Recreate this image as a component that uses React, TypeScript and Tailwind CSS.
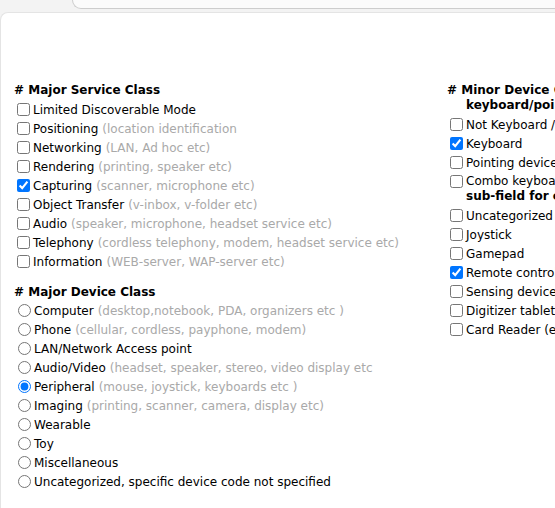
import React from "react"

type Item = { label: string; hint?: string; checked?: boolean }

const serviceClasses: Item[] = [
  { label: "Limited Discoverable Mode" },
  { label: "Positioning", hint: "(location identification" },
  { label: "Networking", hint: "(LAN, Ad hoc etc)" },
  { label: "Rendering", hint: "(printing, speaker etc)" },
  { label: "Capturing", hint: "(scanner, microphone etc)", checked: true },
  { label: "Object Transfer", hint: "(v-inbox, v-folder etc)" },
  { label: "Audio", hint: "(speaker, microphone, headset service etc)" },
  { label: "Telephony", hint: "(cordless telephony, modem, headset service etc)" },
  { label: "Information", hint: "(WEB-server, WAP-server etc)" },
]

const deviceClasses: Item[] = [
  { label: "Computer", hint: "(desktop,notebook, PDA, organizers etc )" },
  { label: "Phone", hint: "(cellular, cordless, payphone, modem)" },
  { label: "LAN/Network Access point" },
  { label: "Audio/Video", hint: "(headset, speaker, stereo, video display etc" },
  { label: "Peripheral", hint: "(mouse, joystick, keyboards etc )", checked: true },
  { label: "Imaging", hint: "(printing, scanner, camera, display etc)" },
  { label: "Wearable" },
  { label: "Toy" },
  { label: "Miscellaneous" },
  { label: "Uncategorized, specific device code not specified" },
]

const minorBefore: Item[] = [
  { label: "Not Keyboard / Not Pointing Device" },
  { label: "Keyboard", checked: true },
  { label: "Pointing device" },
]

const minorAfter: Item[] = [
  { label: "Uncategorized" },
  { label: "Joystick" },
  { label: "Gamepad" },
  { label: "Remote control", checked: true },
  { label: "Sensing device" },
  { label: "Digitizer tablet" },
  { label: "Card Reader (e.g. SIM Card Reader)" },
]

function CheckRow({ item }: { item: Item }) {
  return (
    <label className="flex h-[19px] items-center whitespace-nowrap">
      <input
        type="checkbox"
        defaultChecked={item.checked}
        className="ml-[3px] mr-[3px] h-[13px] w-[13px] shrink-0 accent-[#0075ff]"
      />
      <span className="text-black">{item.label}</span>
      {item.hint && <span className="ml-[4px] text-[#a9a9a9]">{item.hint}</span>}
    </label>
  )
}

function RadioRow({ item }: { item: Item }) {
  return (
    <label className="flex h-[19px] items-center whitespace-nowrap">
      <input
        type="radio"
        name="major"
        defaultChecked={item.checked}
        className="ml-[4px] mr-[3px] h-[13px] w-[13px] shrink-0 accent-[#0075ff]"
      />
      <span className="text-black">{item.label}</span>
      {item.hint && <span className="ml-[4px] text-[#a9a9a9]">{item.hint}</span>}
    </label>
  )
}

export default function App() {
  return (
    <div
      className="h-[508px] w-[555px] overflow-hidden bg-[#f3f3f3] text-[12px] text-black"
      style={{ fontFamily: '"DejaVu Sans", Verdana, sans-serif' }}
    >
      <div className="ml-[72px] h-[9px] rounded-bl-[12px] border-b border-l border-[#cdcdcd] bg-[#fbfbfb]" />
      <div className="mt-[3px] h-[600px] w-[700px] rounded-tl-[8px] border-l border-t border-[#e4e4e4] bg-white pl-[13px] pt-[70px]">
        <div className="flex">
          <div className="w-[433px] shrink-0">
            <h3 className="leading-[15px] font-bold">
              # Major Service Class
            </h3>
            <div className="mt-[2px]">
              {serviceClasses.map((it) => (
                <CheckRow key={it.label} item={it} />
              ))}
            </div>
            <h3 className="mt-[14px] leading-[15px] font-bold">
              # Major Device Class
            </h3>
            <div className="mt-[1px]">
              {deviceClasses.map((it) => (
                <RadioRow key={it.label} item={it} />
              ))}
            </div>
          </div>
          <div className="w-[260px] shrink-0">
            <h3 className="leading-[15px] font-bold">
              # Minor Device Class for
              <br />
              <span className="pl-[19px]">keyboard/pointing</span>
            </h3>
            <div className="mt-[2px]">
              {minorBefore.map((it) => (
                <CheckRow key={it.label} item={it} />
              ))}
              <label className="flex items-start whitespace-nowrap pt-[2px]">
                <input
                  type="checkbox"
                  className="mt-[1px] ml-[3px] mr-[3px] h-[13px] w-[13px] shrink-0 accent-[#0075ff]"
                />
                <span className="leading-[15px]">
                  Combo keyboard/pointing device
                  <br />
                  <b>sub-field for combo</b>
                </span>
              </label>
              <div className="mt-[2px]">
                {minorAfter.map((it) => (
                  <CheckRow key={it.label} item={it} />
                ))}
              </div>
            </div>
          </div>
        </div>
      </div>
    </div>
  )
}
